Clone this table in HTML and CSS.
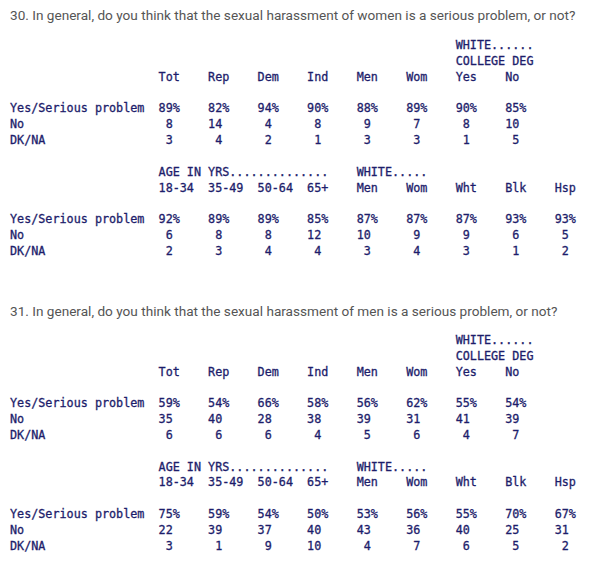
FILE: index.html
```html
<!DOCTYPE html>
<html>
<head>
<meta charset="utf-8">
<link rel="stylesheet" href="styles.css">
</head>
<body>
<section class="question">
<p class="title">30. In general, do you think that the sexual harassment of women is a serious problem, or not?</p>
<pre class="table">                                                               WHITE......
                                                               COLLEGE DEG
                     Tot    Rep    Dem    Ind    Men    Wom    Yes    No

Yes/Serious problem  89%    82%    94%    90%    88%    89%    90%    85%
No                    8     14      4      8      9      7      8     10
DK/NA                 3      4      2      1      3      3      1      5

                     AGE IN YRS..............    WHITE.....
                     18-34  35-49  50-64  65+    Men    Wom    Wht    Blk    Hsp

Yes/Serious problem  92%    89%    89%    85%    87%    87%    87%    93%    93%
No                    6      8      8     12     10      9      9      6      5
DK/NA                 2      3      4      4      3      4      3      1      2</pre>
</section>
<section class="question second">
<p class="title">31. In general, do you think that the sexual harassment of men is a serious problem, or not?</p>
<pre class="table table-second">                                                               WHITE......
                                                               COLLEGE DEG
                     Tot    Rep    Dem    Ind    Men    Wom    Yes    No

Yes/Serious problem  59%    54%    66%    58%    56%    62%    55%    54%
No                   35     40     28     38     39     31     41     39
DK/NA                 6      6      6      4      5      6      4      7

                     AGE IN YRS..............    WHITE.....
                     18-34  35-49  50-64  65+    Men    Wom    Wht    Blk    Hsp

Yes/Serious problem  75%    59%    54%    50%    53%    56%    55%    70%    67%
No                   22     39     37     40     43     36     40     25     31
DK/NA                 3      1      9     10      4      7      6      5      2</pre>
</section>
</body>
</html>
```
FILE: styles.css
```css
html, body {
  margin: 0;
  padding: 0;
  background: #ffffff;
}

body {
  padding: 5px 0 0 10px;
}

.question {
  display: flex;
  flex-direction: column;
}

.second {
  margin-top: 41px;
}

.title {
  margin: 0;
  font-family: Roboto, "Noto Sans", sans-serif;
  font-size: 13.6px;
  line-height: 20px;
  color: #555555;
  white-space: nowrap;
}

.table {
  margin: 13px 0 0 0;
  font-family: "DejaVu Sans Mono", monospace;
  font-size: 11.75px;
  line-height: 15.85px;
  color: #1d1d6b;
  -webkit-text-stroke: 0.3px #1d1d6b;
}

.table-second {
  margin-top: 12px;
}
```
